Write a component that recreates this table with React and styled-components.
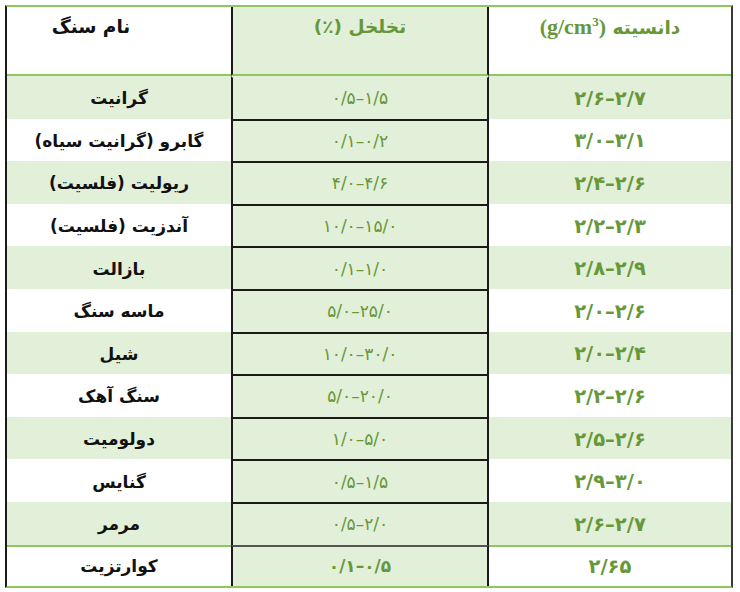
import React from "react";
import styled, { createGlobalStyle } from "styled-components";

const GREEN_LINE = "#8fc65e";
const GREEN_BG = "#e2efd9";
const GREEN_TEXT = "#66983a";
const DARK = "#1a1a1a";

const Global = createGlobalStyle`
  html, body { margin: 0; padding: 0; background: #ffffff; }
  body { font-family: "DejaVu Sans", "Noto Sans", sans-serif; }
`;

const Page = styled.div`
  padding: 5px 0 0 5px;
`;

const Table = styled.table`
  width: 728px;
  table-layout: fixed;
  border-collapse: separate;
  border-spacing: 0;
  direction: rtl;
  border-top: 2px solid ${GREEN_LINE};
  border-bottom: 2px solid ${GREEN_LINE};
  border-left: 2px solid ${DARK};
  border-right: 2px solid #3a3a3a;
`;

const Col = styled.col`
  width: ${(p) => p.$w}px;
`;

const HeadCell = styled.th`
  height: 59px;
  padding-top: 8px;
  padding-left: 0;
  padding-right: ${(p) => (p.$shiftLeft ? p.$shiftLeft * 2 : 0)}px;
  padding-bottom: 0;
  vertical-align: top;
  text-align: center;
  font-size: 18.5px;
  font-weight: bold;
  line-height: 24px;
  white-space: nowrap;
  color: ${(p) => (p.$green ? GREEN_TEXT : "#111")};
  background: ${(p) => (p.$shade ? GREEN_BG : "#fff")};
  border-bottom: 2px solid ${GREEN_LINE};
  border-left: ${(p) => (p.$mid ? `2px solid ${DARK}` : "none")};
  border-right: ${(p) => (p.$mid ? `2px solid ${DARK}` : "none")};
`;

const Latin = styled.span`
  direction: ltr;
  unicode-bidi: isolate;
  font-family: "Liberation Serif", serif;
  font-size: 22px;
`;

const Sup = styled.sup`
  font-size: 13px;
  vertical-align: 8px;
  line-height: 0;
`;

const Cell = styled.td`
  height: ${(p) => (p.$last ? 39 : 40.6)}px;
  padding: 0;
  text-align: center;
  vertical-align: middle;
  background: ${(p) => (p.$shade ? GREEN_BG : "#fff")};
  border-top: 2px solid
    ${(p) => (p.$topLine ? p.$topLine : "transparent")};
  border-left: ${(p) => (p.$mid ? `2px solid ${DARK}` : "none")};
  border-right: ${(p) => (p.$mid ? `2px solid ${DARK}` : "none")};
`;

const Name = styled.span`
  font-size: 17px;
  font-weight: bold;
  color: #111;
`;

const Porosity = styled.span`
  direction: ltr;
  unicode-bidi: isolate;
  font-size: 17px;
  font-weight: ${(p) => (p.$bold ? "bold" : "normal")};
  color: ${GREEN_TEXT};
`;

const Density = styled.span`
  direction: ltr;
  unicode-bidi: isolate;
  font-size: 19.5px;
  font-weight: bold;
  color: ${GREEN_TEXT};
`;

const rows = [
  ["گرانیت", "۰/۵–۱/۵", "۲/۶–۲/۷"],
  ["گابرو (گرانیت سیاه)", "۰/۱–۰/۲", "۳/۰–۳/۱"],
  ["ریولیت (فلسیت)", "۴/۰–۴/۶", "۲/۴–۲/۶"],
  ["آندزیت (فلسیت)", "۱۰/۰–۱۵/۰", "۲/۲–۲/۳"],
  ["بازالت", "۰/۱–۱/۰", "۲/۸–۲/۹"],
  ["ماسه سنگ", "۵/۰–۲۵/۰", "۲/۰–۲/۶"],
  ["شیل", "۱۰/۰–۳۰/۰", "۲/۰–۲/۴"],
  ["سنگ آهک", "۵/۰–۲۰/۰", "۲/۲–۲/۶"],
  ["دولومیت", "۱/۰–۵/۰", "۲/۵–۲/۶"],
  ["گنایس", "۰/۵–۱/۵", "۲/۹–۳/۰"],
  ["مرمر", "۰/۵–۲/۰", "۲/۶–۲/۷"],
  ["کوارتزیت", "۰/۱–۰/۵", "۲/۶۵"],
];

export default function App() {
  return (
    <>
      <Global />
      <Page>
        <Table dir="rtl">
          <colgroup>
            <Col $w={242} />
            <Col $w={258} />
            <Col $w={224} />
          </colgroup>
          <thead>
            <tr>
              <HeadCell $green>
                دانسیته{" "}
                <Latin dir="ltr">
                  (g/cm<Sup>3</Sup>)
                </Latin>
              </HeadCell>
              <HeadCell $green $shade $mid>
                تخلخل (٪)
              </HeadCell>
              <HeadCell $shiftLeft={28}>نام سنگ</HeadCell>
            </tr>
          </thead>
          <tbody>
            {rows.map(([name, por, den], i) => {
              const shade = i % 2 === 0;
              const last = i === rows.length - 1;
              const sideLine = last ? GREEN_LINE : null;
              const midLine = i === 0 ? null : last ? "#555" : DARK;
              return (
                <tr key={i}>
                  <Cell $shade={shade} $last={last} $topLine={sideLine}>
                    <Density>{den}</Density>
                  </Cell>
                  <Cell $shade $mid $last={last} $topLine={midLine}>
                    <Porosity $bold={last}>{por}</Porosity>
                  </Cell>
                  <Cell $shade={shade} $last={last} $topLine={sideLine}>
                    <Name>{name}</Name>
                  </Cell>
                </tr>
              );
            })}
          </tbody>
        </Table>
      </Page>
    </>
  );
}
